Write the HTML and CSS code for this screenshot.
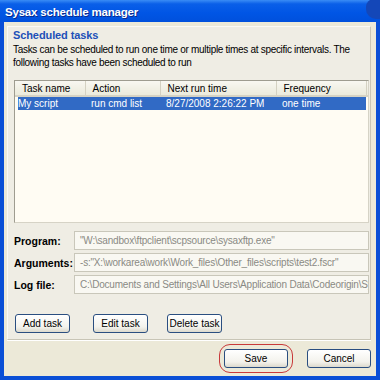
FILE: index.html
```html
<!DOCTYPE html>
<html lang="en">
<head>
  <meta charset="UTF-8">
  <title>Sysax schedule manager</title>
  <link rel="stylesheet" href="styles.css">
</head>
<body>
  <div class="window">
    <div class="titlebar">
      <span class="title">Sysax schedule manager</span>
      <span class="corner"></span>
    </div>
    <div class="dialog">
      <div class="panel">
        <h2>Scheduled tasks</h2>
        <p class="desc">Tasks can be scheduled to run one time or multiple times at specific intervals. The<br>following tasks have been scheduled to run</p>

        <!-- lista de tareas programadas -->
        <div class="listview">
          <table>
            <colgroup>
              <col class="c-name"><col class="c-action"><col class="c-next"><col class="c-freq"><col>
            </colgroup>
            <thead>
              <tr><th>Task name</th><th>Action</th><th>Next run time</th><th>Frequency</th><th class="filler"></th></tr>
            </thead>
            <tbody>
              <tr class="selected"><td class="first">My script</td><td>run cmd list</td><td>8/27/2008 2:26:22 PM</td><td>one time</td><td class="filler"></td></tr>
            </tbody>
          </table>
        </div>

        <div class="fields">
          <label>Program:</label>
          <div class="input">"W:\sandbox\ftpclient\scpsource\sysaxftp.exe"</div>
          <label>Arguments:</label>
          <div class="input">-s:"X:\workarea\work\Work_files\Other_files\scripts\test2.fscr"</div>
          <label>Log file:</label>
          <div class="input">C:\Documents and Settings\All Users\Application Data\Codeorigin\Sy</div>
        </div>

        <div class="task-buttons">
          <button class="btn">Add task</button>
          <button class="btn">Edit task</button>
          <button class="btn">Delete task</button>
        </div>
      </div>

      <div class="footer">
        <span class="highlight"><button class="btn wide">Save</button></span>
        <button class="btn wide">Cancel</button>
      </div>
    </div>
  </div>
</body>
</html>
```

FILE: styles.css
```css
* { margin: 0; padding: 0; box-sizing: border-box; }
body {
  font-family: 'Liberation Sans', Arial, sans-serif;
  font-size: 10px;
  color: #000;
  background: #ece9d8;
  width: 380px;
  height: 380px;
  overflow: hidden;
}
.window {
  width: 380px;
  height: 380px;
  display: flex;
  flex-direction: column;
  background: #0a4fd6;
}
/* barra de titulo estilo XP */
.titlebar {
  height: 22px;
  display: flex;
  align-items: center;
  justify-content: space-between;
  padding-left: 5px;
  background: linear-gradient(#3a8cf5 0%, #0a5fe8 18%, #0055e5 60%, #0050dc 100%);
}
.title {
  color: #fff;
  font-weight: bold;
  font-size: 11.5px;
  letter-spacing: -0.2px;
  text-shadow: 1px 1px 0 #0a2a8c;
  padding-top: 1px;
}
.corner {
  width: 14px;
  height: 20px;
  margin-top: -4px;
  border-radius: 8px 0 0 10px;
  background: #1447b8;
}
.dialog {
  flex: 1;
  margin: 0 4px 4px 4px;
  background: #ece9d8;
  display: flex;
  flex-direction: column;
  padding: 4px 5px 0 3px;
}
.panel {
  height: 314px;
  background: #efede4;
  border: 1px solid #fbfaf6;
  border-right-color: #c8c5b6;
  border-bottom-color: #c8c5b6;
  padding: 0 1px 0 5px;
  display: flex;
  flex-direction: column;
}
.panel h2 {
  font-size: 11px;
  font-weight: bold;
  letter-spacing: -0.1px;
  color: #2150b8;
  line-height: 14px;
  padding-top: 1px;
}
.desc {
  line-height: 13px;
  margin-top: 1px;
  letter-spacing: -0.3px;
  white-space: nowrap;
}
.listview {
  margin: 11px 0 0 1px;
  height: 143px;
  background: #fffcf3;
  border: 1px solid #9e9c90;
  border-right-color: #d6d3c6;
  border-bottom-color: #d6d3c6;
}
.listview table {
  width: 100%;
  border-collapse: collapse;
  table-layout: fixed;
}
.c-name { width: 70px; }
.c-action { width: 75px; }
.c-next { width: 116px; }
.c-freq { width: 90px; }
.listview th {
  height: 15px;
  font-weight: normal;
  text-align: left;
  padding-left: 7px;
  white-space: nowrap;
  background: linear-gradient(#f8f7f1, #ebeadb);
  border-bottom: 2px solid #d6d3c4;
  border-right: 1px solid #d4d1c2;
}
.listview th.filler { border-right: none; padding: 0; }
.listview td {
  height: 14px;
  padding-left: 6px;
  white-space: nowrap;
  overflow: hidden;
}
.listview tr.selected td {
  background: #316ac5;
  color: #fff;
}
.listview tr.selected td.first { padding-left: 3px; box-shadow: inset 3px 0 0 #fffcf3; }
.listview tr.selected td.filler { background: transparent; }
.fields {
  margin: 8px 0 0 1px;
  display: grid;
  grid-template-columns: 60px 1fr;
  row-gap: 3px;
  align-items: center;
}
.fields label {
  font-weight: bold;
  font-size: 10.5px;
}
.input {
  height: 19px;
  line-height: 17px;
  padding-left: 5px;
  color: #8a8a84;
  letter-spacing: -0.2px;
  background: #f9f8f2;
  border: 1px solid #c9c7ba;
  white-space: nowrap;
  overflow: hidden;
}
.task-buttons {
  margin: 20px 0 0 2px;
  display: flex;
  gap: 22px;
}
.btn {
  font-family: inherit;
  font-size: 10px;
  height: 19px;
  padding: 0 8px;
  color: #000;
  background: linear-gradient(#ffffff, #f3f2ec 70%, #dcd9cd);
  border: 1px solid #2a4e80;
  border-radius: 3px;
  white-space: nowrap;
}
.task-buttons .btn { width: 55px; padding: 0; }
.task-buttons .btn + .btn { margin-left: 1px; }
.task-buttons .btn + .btn + .btn { margin-left: -3px; }
.footer {
  flex: 1;
  display: flex;
  align-items: center;
  justify-content: flex-end;
  gap: 14px;
  border-top: 1px solid #fff;
}
.btn.wide { width: 64px; height: 19px; }
/* marca roja alrededor de Guardar */
.highlight {
  display: inline-flex;
  padding: 4px 4px;
  border: 1px solid #c8393a;
  border-radius: 11px;
}
```
